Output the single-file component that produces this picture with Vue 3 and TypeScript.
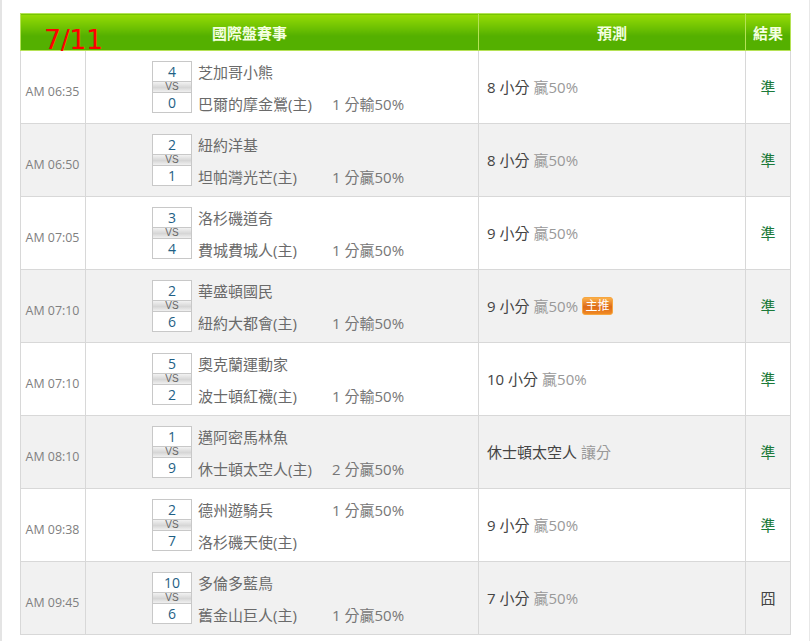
<script setup lang="ts">
interface Row {
  time: string
  s1: string
  s2: string
  t1: string
  t2: string
  line: string
  lineOnFirst?: boolean
  pick: string
  odds: string
  star?: boolean
  result: string
}
const rows: Row[] = [
  { time: 'AM 06:35', s1: '4', s2: '0', t1: '芝加哥小熊', t2: '巴爾的摩金鶯(主)', line: '1 分輸50%', pick: '8 小分', odds: '贏50%', result: '準' },
  { time: 'AM 06:50', s1: '2', s2: '1', t1: '紐約洋基', t2: '坦帕灣光芒(主)', line: '1 分贏50%', pick: '8 小分', odds: '贏50%', result: '準' },
  { time: 'AM 07:05', s1: '3', s2: '4', t1: '洛杉磯道奇', t2: '費城費城人(主)', line: '1 分贏50%', pick: '9 小分', odds: '贏50%', result: '準' },
  { time: 'AM 07:10', s1: '2', s2: '6', t1: '華盛頓國民', t2: '紐約大都會(主)', line: '1 分輸50%', pick: '9 小分', odds: '贏50%', star: true, result: '準' },
  { time: 'AM 07:10', s1: '5', s2: '2', t1: '奧克蘭運動家', t2: '波士頓紅襪(主)', line: '1 分輸50%', pick: '10 小分', odds: '贏50%', result: '準' },
  { time: 'AM 08:10', s1: '1', s2: '9', t1: '邁阿密馬林魚', t2: '休士頓太空人(主)', line: '2 分贏50%', pick: '休士頓太空人', odds: '讓分', result: '準' },
  { time: 'AM 09:38', s1: '2', s2: '7', t1: '德州遊騎兵', t2: '洛杉磯天使(主)', line: '1 分贏50%', lineOnFirst: true, pick: '9 小分', odds: '贏50%', result: '準' },
  { time: 'AM 09:45', s1: '10', s2: '6', t1: '多倫多藍鳥', t2: '舊金山巨人(主)', line: '1 分贏50%', pick: '7 小分', odds: '贏50%', result: '囧' },
]
</script>

<template>
  <div class="page">
    <div class="board">
      <span class="date">7/11</span>
      <table class="table">
        <colgroup>
          <col class="c-time" />
          <col class="c-game" />
          <col class="c-pick" />
          <col class="c-res" />
        </colgroup>
        <thead>
          <tr>
            <th colspan="2">國際盤賽事</th>
            <th>預測</th>
            <th>結果</th>
          </tr>
        </thead>
        <tbody>
          <tr v-for="(r, i) in rows" :key="i" :class="{ alt: i % 2 === 1 }">
            <td class="time">{{ r.time }}</td>
            <td class="game">
              <div class="match">
                <div class="score">
                  <div class="num">{{ r.s1 }}</div>
                  <div class="vs">VS</div>
                  <div class="num">{{ r.s2 }}</div>
                </div>
                <div class="teams">
                  <div class="team">
                    <span class="name">{{ r.t1 }}</span>
                    <span v-if="r.lineOnFirst" class="line">{{ r.line }}</span>
                  </div>
                  <div class="team">
                    <span class="name">{{ r.t2 }}</span>
                    <span v-if="!r.lineOnFirst" class="line">{{ r.line }}</span>
                  </div>
                </div>
              </div>
            </td>
            <td class="pick">
              <span class="pick-main">{{ r.pick }}</span>
              <span class="odds">{{ r.odds }}</span>
              <span v-if="r.star" class="badge">主推</span>
            </td>
            <td class="res" :class="{ miss: r.result === '囧' }">{{ r.result }}</td>
          </tr>
        </tbody>
      </table>
    </div>
  </div>
</template>

<style>
html,
body {
  margin: 0;
  background: #fff;
  overflow: hidden;
}
</style>

<style scoped>
.page {
  width: 810px;
  height: 641px;
  box-sizing: border-box;
  padding: 13px 0 0 18px;
  font-family: "Open Sans", "Noto Sans CJK TC", sans-serif;
  font-size: 15px;
  color: #6a6a6a;
  overflow: hidden;
  border-left: 2px solid #e4e4e4;
  border-right: 1px solid #e8e8e8;
}
.board {
  position: relative;
  width: 770px;
}
.date {
  position: absolute;
  left: 24px;
  top: 10px;
  font-family: "DejaVu Sans", sans-serif;
  font-size: 27px;
  letter-spacing: -0.5px;
  line-height: 34px;
  color: #f00;
  z-index: 1;
}
.table {
  width: 770px;
  border-collapse: collapse;
  table-layout: fixed;
}
.c-time { width: 65px; }
.c-game { width: 393px; }
.c-pick { width: 267px; }
.c-res { width: 45px; }
th {
  height: 37px;
  padding: 0;
  box-sizing: border-box;
  font-size: 15px;
  font-weight: 700;
  color: #f4ffe0;
  text-align: center;
  background: linear-gradient(#97dc05, #54b000 60%, #54b000);
  border: 1px solid #b5e256;
}
td {
  height: 73px;
  padding: 0;
  box-sizing: border-box;
  border: 1px solid #d8d8d8;
  background: #fff;
}
.alt td {
  background: #f1f1f1;
}
.time {
  text-align: center;
  font-size: 12.4px;
  color: #808080;
  padding-top: 8px;
  padding-right: 1px;
}
.match {
  display: flex;
  align-items: center;
  margin-left: 66px;
}
.score {
  width: 38px;
  border: 1px solid #c8c8c8;
  background: #fff;
}
.num {
  height: 19px;
  line-height: 19px;
  text-align: center;
  font-size: 14px;
  color: #1f5f85;
}
.vs {
  height: 10px;
  line-height: 10px;
  text-align: center;
  font-family: "Liberation Sans", sans-serif;
  font-size: 10px;
  color: #666;
  background: linear-gradient(#f2f2f2, #d6d6d6 55%, #f0f0f0);
  border-top: 1px solid #c8c8c8;
  border-bottom: 1px solid #c8c8c8;
}
.teams {
  margin-left: 6px;
  padding-top: 1px;
  display: flex;
  flex-direction: column;
  gap: 12px;
}
.team {
  display: flex;
  height: 20px;
  line-height: 20px;
}
.name {
  width: 134px;
  white-space: nowrap;
}
.line {
  color: #777;
}
.pick {
  padding-left: 8px;
  padding-bottom: 2px;
}
.pick-main {
  color: #444;
}
.odds {
  margin-left: 4px;
  color: #999;
}
.badge {
  display: inline-block;
  box-sizing: border-box;
  margin-left: 4px;
  width: 31px;
  height: 18px;
  line-height: 15px;
  text-align: center;
  font-size: 12px;
  color: #fff;
  border-radius: 3px;
  border: 1px solid #f7a63f;
  background: linear-gradient(#fbb04a, #dd6a18 55%, #f08a24);
  vertical-align: 2px;
}
.res {
  text-align: center;
  color: #1b7a3a;
  padding-bottom: 2px;
}
.res.miss {
  color: #444;
}
</style>
